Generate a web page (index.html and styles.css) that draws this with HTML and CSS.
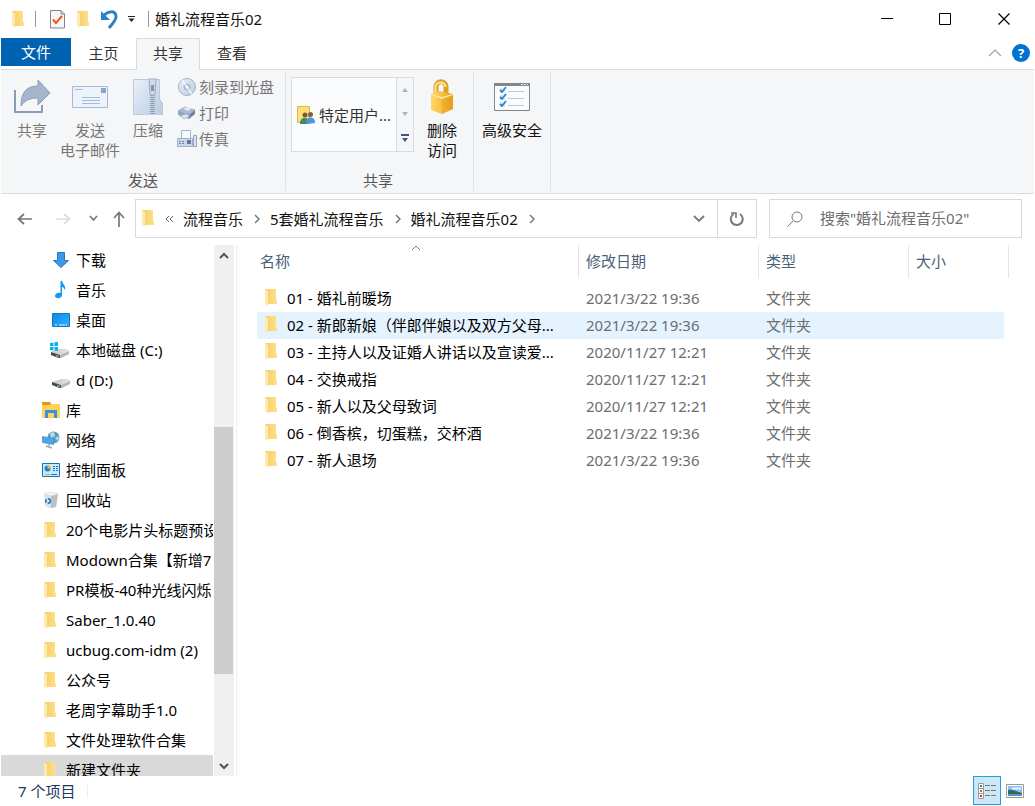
FILE: index.html
```html
<!DOCTYPE html>
<html lang="zh-CN">
<head>
<meta charset="utf-8">
<title>婚礼流程音乐02</title>
<link rel="stylesheet" href="styles.css">
</head>
<body>
<svg class="defs" aria-hidden="true">
  <defs>
    <linearGradient id="gFolder" x1="0" x2="1"><stop offset="0" stop-color="#f3cd67"/><stop offset="1" stop-color="#ffe08a"/></linearGradient>
    <linearGradient id="gSteel" x1="0" y1="0" x2="1" y2="1"><stop offset="0" stop-color="#eaf1fa"/><stop offset="1" stop-color="#b9cbe2"/></linearGradient>
    <linearGradient id="gGold" x1="0" x2="1"><stop offset="0" stop-color="#ffd966"/><stop offset="1" stop-color="#eda41c"/></linearGradient>
    <linearGradient id="gBlue" x1="0" y1="0" x2="1" y2="1"><stop offset="0" stop-color="#0a86e8"/><stop offset="1" stop-color="#35b4fa"/></linearGradient>
    <linearGradient id="gDrive" x1="0" x2="1"><stop offset="0" stop-color="#c4c6c9"/><stop offset="1" stop-color="#e3e4e6"/></linearGradient>
  </defs>
  <symbol id="folder" viewBox="0 0 12 17"><path d="M0 0h11v11h1v4H3z" fill="url(#gFolder)"/><path d="M0 0l3 2.500V17l-3-2z" fill="#ffeaae"/></symbol>
  <symbol id="drive" viewBox="0 0 18 12"><path d="M0 6l9-3h7l2 2-9 4z" fill="url(#gDrive)"/><path d="M0 6l9 3v3l-3-.5L0 9z" fill="#4a4a4a"/><path d="M9 9l9-4v3l-8 4H9z" fill="#b4b6b9"/><path d="M5 10h2.500" stroke="#5fdc4f" stroke-width="1.500"/></symbol>
  <symbol id="chev" viewBox="0 0 6 10"><path d="M1 1l4 4-4 4" fill="none" stroke="#777" stroke-width="1.500"/></symbol>
</svg>

<header class="titlebar">
  <svg class="folder"><use href="#folder"/></svg>
  <i class="tick"></i>
  <button class="quick" aria-label="属性"><svg width="15" height="19" viewBox="0 0 15 19"><path d="M.5.5h10.500l3.500 3.500v14H.5z" fill="#f5f6f7" stroke="#858585"/><path d="M11 .5v3.500h3.500" fill="none" stroke="#858585"/><path d="M3 9.500l3 3.500 6-7" fill="none" stroke="#f0561d" stroke-width="2"/></svg></button>
  <button class="quick" aria-label="新建文件夹"><svg class="folder"><use href="#folder"/></svg></button>
  <button class="quick undo" aria-label="撤消"><svg width="17" height="19" viewBox="0 0 17 19"><path d="M2 6c5-5 12-6 13 0 .5 4-3 7-7 12" fill="none" stroke="#2d7fc8" stroke-width="3"/><path d="M0 1v9h9L6 7 3 4z" fill="#2d7fc8"/></svg></button>
  <button class="quick" aria-label="自定义快速访问工具栏"><svg width="7" height="6" viewBox="0 0 7 6"><path d="M0 .5h7" stroke="#222"/><path d="M.5 2.500h6l-3 3.500z" fill="#222"/></svg></button>
  <i class="tick end"></i>
  <h1>婚礼流程音乐02</h1>
  <div class="winbtns">
    <button aria-label="最小化"><svg width="12" height="12"><path d="M0 5.500h12" stroke="#000"/></svg></button>
    <button aria-label="最大化"><svg width="12" height="12"><path d="M.5.5h11v11H.5z" fill="none" stroke="#000"/></svg></button>
    <button aria-label="关闭"><svg width="12" height="12"><path d="M.5.5l11 11M11.500.5l-11 11" stroke="#000" stroke-width="1.200"/></svg></button>
  </div>
</header>

<nav class="tabs">
  <button class="file">文件</button>
  <button>主页</button>
  <button class="active">共享</button>
  <button>查看</button>
  <span class="help">
    <button aria-label="最小化功能区"><svg width="14" height="8"><path d="M1 7l6-6 6 6" fill="none" stroke="#aaa" stroke-width="1.400"/></svg></button>
    <button class="q" aria-label="帮助">?</button>
  </span>
</nav>

<section class="ribbon">
  <div class="group send">
    <div class="tools">
      <button class="big off"><svg width="38" height="40" viewBox="0 0 38 40"><path d="M2 13v22h27v-7" fill="none" stroke="#8b9cb8" stroke-width="2"/><path d="M8 29c0-13 5-20 17-20V3l12 13-12 12v-7c-8 0-13 2-17 8z" fill="#a6b4cc" stroke="#8b9cb8"/></svg><span>共享</span></button>
      <button class="big off"><svg width="36" height="40" viewBox="0 0 36 40"><path d="M.5 9.500h35v21H.5z" fill="#edf3fa" stroke="#a6bad6"/><path d="M29 11h5v5h-5z" fill="#8da3c7"/><path d="M3 12.500h8M10 20.500h18M10 23.500h18M10 26.500h18" stroke="#a6bad6"/></svg><span>发送<br>电子邮件</span></button>
      <button class="big off"><svg width="30" height="40" viewBox="0 0 30 40"><path d="M0 2h27v20l3 4v12H0z" fill="url(#gSteel)"/><path d="M.5 2.500h26v20l3 4v11H.5z" fill="none" stroke="#bccbe0"/><path d="M16 2h7v36h-7z" fill="#c3d1e4"/><path d="M19.500 18v20" stroke="#8b98ae" stroke-width="4" stroke-dasharray="1 1"/><path d="M16 2h7l-1 14c-1 3-4 3-5 0z" fill="#d0daea" stroke="#9babc4"/><path d="M18 8h3v6h-3z" fill="#8595ad"/></svg><span>压缩</span></button>
      <div class="small">
        <button><svg width="20" height="20" viewBox="0 0 20 20"><circle cx="10" cy="10" r="8.500" fill="url(#gSteel)" stroke="#a0b2cd"/><circle cx="10" cy="10" r="3.500" fill="#a9bad3"/><circle cx="10" cy="10" r="1.500" fill="#fff"/><path d="M10 10L5 3M10 10l5 7" stroke="#fff" stroke-width="1.500" opacity=".7"/></svg>刻录到光盘</button>
        <button><svg width="20" height="20" viewBox="0 0 20 20"><path d="M1 8l7-4 10 3-6 5z" fill="#a9b9d2" stroke="#8596b4" stroke-width=".6"/><path d="M1 8l11 4v4L1 12z" fill="#93a5c2"/><path d="M12 12l6-5v4l-6 5z" fill="#6f82a3"/><path d="M6 6l4-2 5 1.500L11 8z" fill="#dfe8f3"/><path d="M3 13l6-2 4 2-6 3z" fill="#dce7f3" stroke="#93a5c2" stroke-width=".6"/></svg>打印</button>
        <button><svg width="20" height="20" viewBox="0 0 20 20"><path d="M4.500 9V1.500h9V9" fill="#f4f8fc" stroke="#a5b5cd"/><path d="M.5 9.500h15v8H.5z" fill="#cbd8e8" stroke="#9fb0ca"/><path d="M16.500 6.500h3v11h-3z" fill="#dce6f2" stroke="#91a3c0"/><path d="M2 12.500h6M2 14.500h6" stroke="#6f82a3" stroke-dasharray="2 1"/><path d="M10 11h4v4h-4z" fill="#62789f"/></svg>传真</button>
      </div>
    </div>
    <div class="caption">发送</div>
  </div>
  <div class="group share">
    <div class="tools">
      <div class="gallery">
        <button class="people"><svg width="18" height="20" viewBox="0 0 18 20"><path d="M.5 1.500h12v16H.5z" fill="#ffdf7a" stroke="#e3b63b"/><circle cx="8" cy="10" r="2.500" fill="#745a3e"/><path d="M3 19c0-5 2-6 5-6s4 2 4 6z" fill="#3f8c62"/><circle cx="13.500" cy="9.500" r="2.500" fill="#82633d"/><path d="M9 19c0-5 2-6.500 4.500-6.500S18 14 18 18z" fill="#4e95d3"/></svg>特定用户...</button>
        <div class="spin">
          <button aria-label="上一行"><svg width="6" height="4"><path d="M0 4l3-4 3 4z" fill="#acb4be"/></svg></button>
          <button aria-label="下一行"><svg width="6" height="4"><path d="M0 0l3 4 3-4z" fill="#acb4be"/></svg></button>
          <button aria-label="更多"><svg width="8" height="9"><path d="M0 0h8v2H0zM1 4l3 4 3-4z" fill="#3f5675"/></svg></button>
        </div>
      </div>
      <button class="big"><svg width="28" height="40" viewBox="0 0 28 40"><path d="M8 18V10c0-7 10-7 10 0v8" fill="none" stroke="#dca129" stroke-width="5"/><path d="M7.500 17V10c0-6 10-6 10 0" fill="none" stroke="#ffe48b" stroke-width="2"/><path d="M3 17l8-3 14 3v15l-11 5-11-4z" fill="url(#gGold)"/><path d="M3 17l11 3 11-3v1l-11 4-11-4z" fill="#ffe79a"/><path d="M14 22v15l11-5V18z" fill="#df951a" opacity=".35"/></svg><span>删除<br>访问</span></button>
    </div>
    <div class="caption">共享</div>
  </div>
  <div class="group adv">
    <div class="tools">
      <button class="big"><svg width="36" height="40" viewBox="0 0 36 40"><path d="M.5 6.500h35v27H.5z" fill="#fbfcfd" stroke="#83868a"/><path d="M0 6h36v3H0z" fill="#83868a"/><path d="M27 7.500h7" stroke="#eee" stroke-dasharray="2 1"/><path d="M14 14.500h16M14 21.500h16M14 28.500h16" stroke="#c5c8cb"/><path d="M6 11h5v5H6zM6 18h5v5H6zM6 25h5v5H6z" fill="#d8e9f7"/><path d="M6 13l2 2 4-5M6 20l2 2 4-5M6 27l2 2 4-5" fill="none" stroke="#2488d8" stroke-width="1.800"/></svg><span>高级安全</span></button>
    </div>
  </div>
</section>

<div class="navbar">
  <div class="arrows">
    <button aria-label="后退"><svg width="16" height="12"><path d="M15 6H1.500M7 1L1.500 6 7 11" fill="none" stroke="#777" stroke-width="1.700"/></svg></button>
    <button aria-label="前进"><svg width="16" height="12"><path d="M1 6h13.500M9 1l5.500 5L9 11" fill="none" stroke="#ddd" stroke-width="1.700"/></svg></button>
    <button class="recent" aria-label="最近浏览的位置"><svg width="9" height="7"><path d="M1 1l3.500 4L8 1" fill="none" stroke="#777" stroke-width="1.700"/></svg></button>
    <button class="up" aria-label="上移"><svg width="12" height="16"><path d="M6 16V2M1 7l5-5.500L11 7" fill="none" stroke="#777" stroke-width="1.700"/></svg></button>
  </div>
  <div class="address">
    <svg class="folder"><use href="#folder"/></svg>
    <svg class="more" width="9" height="8"><path d="M4 1L1 4l3 3M8 1L5 4l3 3" fill="none" stroke="#666"/></svg>
    <button>流程音乐</button><svg class="chev"><use href="#chev"/></svg>
    <button>5套婚礼流程音乐</button><svg class="chev"><use href="#chev"/></svg>
    <button>婚礼流程音乐02</button><svg class="chev"><use href="#chev"/></svg>
    <button class="drop" aria-label="以前的位置"><svg width="12" height="8"><path d="M1 1l5 5 5-5" fill="none" stroke="#777" stroke-width="1.800"/></svg></button>
    <button class="refresh" aria-label="刷新"><svg width="16" height="16" viewBox="0 0 16 16"><path d="M11 3a6 6 0 1 1-6.500 0" fill="none" stroke="#777" stroke-width="2"/><path d="M2 2h5v5" fill="none" stroke="#777" stroke-width="1.600"/></svg></button>
  </div>
  <label class="search">
    <svg width="16" height="16"><circle cx="10" cy="6" r="5" fill="none" stroke="#777"/><path d="M6 10l-5.500 5.500" stroke="#777"/></svg>
    <input type="text" aria-label="搜索" placeholder='搜索"婚礼流程音乐02"'>
  </label>
</div>

<div class="body">
  <aside class="side">
    <ul class="tree">
      <li class="deep"><svg width="18" height="18"><path d="M5.500 1.500h7v8h4L9 16.500 1.500 9.500h4z" fill="#3d98e8" stroke="#2678c2"/></svg>下载</li>
      <li class="deep"><svg width="18" height="18"><path d="M8.500 0h1.500c1 4 4 4 3 9-1-2-2-3-3-3v8c0 4-7 4-7 1s4-4 5.500-3z" fill="#0b9bf5"/></svg>音乐</li>
      <li class="deep"><svg width="18" height="18"><path d="M.5 2.500h17v13H.5z" fill="url(#gBlue)" stroke="#087bc8"/><path d="M3 14h12" stroke="#d5efff" stroke-dasharray="2 2 6 1"/></svg>桌面</li>
      <li class="deep"><svg width="20" height="18" viewBox="0 0 20 18"><svg x="1" y="5" width="18" height="12"><use href="#drive"/></svg><path d="M0 2l3.500-.5V5H0zM4.500 1.300L8 1v4H4.500zM0 6h3.500v3.500L0 9zM4.500 6H8v4l-3.500-.5z" fill="#00b3ee"/></svg>本地磁盘 (C:)</li>
      <li class="deep"><svg width="18" height="18"><svg y="5" width="18" height="12"><use href="#drive"/></svg></svg>d (D:)</li>
      <li><svg width="18" height="18"><path d="M0 1h8l1 2h9v14H0z" fill="#ffd35b"/><path d="M0 1h8l1 2-2 1H0z" fill="#d99a0f"/><path d="M3 9h12v8h-3v-5H6v5H3z" fill="#3c91dc"/></svg>库</li>
      <li><svg width="18" height="18"><circle cx="11.500" cy="6.500" r="6" fill="#5a9dbb"/><path d="M8 2l4-1 1 4-4 2zM13 7l4-2-1 5z" fill="#b6dce7"/><path d="M.5 5.500l11 2v6l-11-2z" fill="#3fa9f5" stroke="#5a88aa" stroke-width=".7"/><path d="M7 13v2.500M4 15l6 2" fill="none" stroke="#9aabb7" stroke-width="1.500"/></svg>网络</li>
      <li><svg width="18" height="18"><path d="M.5 2.500h17v13H.5z" fill="#c7eaff" stroke="#1a75ad"/><circle cx="5.500" cy="7.500" r="3" fill="#1e82cc"/><path d="M5.500 7.500v-4a4 4 0 0 1 3 4z" fill="#ffb629"/><path d="M11 5.500h2m1 0h2m-5 2h2m1 0h2m-5 2h2m1 0h2" stroke="#167bc0"/><path d="M3 13.500h5" stroke="#ef9d26"/><path d="M9 13.500h6" stroke="#167bc0"/></svg>控制面板</li>
      <li><svg width="18" height="18"><path d="M2 3l6-2 8 2-2 13-6 1-5-2z" fill="#dce1e5"/><path d="M9 5l7-2-2 13-5 1z" fill="#b9c1c8"/><path d="M2 3l6-2 8 2-7 2z" fill="#f6f7f8" stroke="#cbd1d5" stroke-width=".5"/><circle cx="6" cy="10" r="2.300" fill="none" stroke="#1979c9" stroke-width="1.600" stroke-dasharray="3.500 1.300"/></svg>回收站</li>
      <li><svg class="folder"><use href="#folder"/></svg>20个电影片头标题预设</li>
      <li><svg class="folder"><use href="#folder"/></svg>Modown合集【新增7</li>
      <li><svg class="folder"><use href="#folder"/></svg>PR模板-40种光线闪烁</li>
      <li><svg class="folder"><use href="#folder"/></svg>Saber_1.0.40</li>
      <li><svg class="folder"><use href="#folder"/></svg>ucbug.com-idm (2)</li>
      <li><svg class="folder"><use href="#folder"/></svg>公众号</li>
      <li><svg class="folder"><use href="#folder"/></svg>老周字幕助手1.0</li>
      <li><svg class="folder"><use href="#folder"/></svg>文件处理软件合集</li>
      <li class="current"><svg class="folder"><use href="#folder"/></svg>新建文件夹</li>
    </ul>
    <div class="scroll">
      <button aria-label="向上滚动"><svg width="10" height="7"><path d="M1 6l4-4 4 4" fill="none" stroke="#555" stroke-width="2"/></svg></button>
      <div class="track"><div class="thumb"></div></div>
      <button aria-label="向下滚动"><svg width="10" height="7"><path d="M1 1l4 4 4-4" fill="none" stroke="#555" stroke-width="2"/></svg></button>
    </div>
  </aside>
  <main class="list">
    <table>
      <colgroup><col class="c-name"><col class="c-date"><col class="c-type"><col class="c-size"></colgroup>
      <thead><tr><th>名称<svg class="sort" width="10" height="6"><path d="M1 5l4-4 4 4" fill="none" stroke="#777"/></svg></th><th>修改日期</th><th>类型</th><th>大小</th></tr></thead>
      <tbody>
        <tr class="gap"><td colspan="4"></td></tr>
        <tr><td><svg class="folder"><use href="#folder"/></svg>01 - 婚礼前暖场</td><td>2021/3/22 19:36</td><td>文件夹</td><td></td></tr>
        <tr class="hover"><td><svg class="folder"><use href="#folder"/></svg>02 - 新郎新娘（伴郎伴娘以及双方父母...</td><td>2021/3/22 19:36</td><td>文件夹</td><td></td></tr>
        <tr><td><svg class="folder"><use href="#folder"/></svg>03 - 主持人以及证婚人讲话以及宣读爱...</td><td>2020/11/27 12:21</td><td>文件夹</td><td></td></tr>
        <tr><td><svg class="folder"><use href="#folder"/></svg>04 - 交换戒指</td><td>2020/11/27 12:21</td><td>文件夹</td><td></td></tr>
        <tr><td><svg class="folder"><use href="#folder"/></svg>05 - 新人以及父母致词</td><td>2020/11/27 12:21</td><td>文件夹</td><td></td></tr>
        <tr><td><svg class="folder"><use href="#folder"/></svg>06 - 倒香槟，切蛋糕，交杯酒</td><td>2021/3/22 19:36</td><td>文件夹</td><td></td></tr>
        <tr><td><svg class="folder"><use href="#folder"/></svg>07 - 新人退场</td><td>2021/3/22 19:36</td><td>文件夹</td><td></td></tr>
      </tbody>
    </table>
  </main>
</div>

<footer class="status">
  <span>7 个项目</span>
  <div class="views">
    <button class="on" aria-label="详细信息"><svg width="20" height="18" viewBox="0 0 20 18"><path d="M1.500 1.500h5v5h-5zM1.500 6.500h5v5h-5zM1.500 11.500h5v5h-5z" fill="#fff" stroke="#999"/><path d="M3 3h2v2H3z" fill="#268bb0"/><path d="M3 8h2v2H3z" fill="#8c8c2c"/><path d="M3 13h2v2H3z" fill="#c03a28"/><path d="M8 3.500h5m1 0h5M8 8.500h5m1 0h5M8 13.500h5m1 0h5" stroke="#777"/></svg></button>
    <button aria-label="大缩略图"><svg width="18" height="14" viewBox="0 0 18 14"><path d="M.5.5h17v13H.5z" fill="#fff" stroke="#999"/><path d="M2 2h14v10H2z" fill="#8fc0f3"/><path d="M2 6c4-1 8 1 14 3v1H2z" fill="#2f6a5c"/><path d="M2 10h14v2H2z" fill="#5b93c4"/><path d="M6 4.500h9" stroke="#e5f2ff" stroke-width="2"/></svg></button>
  </div>
</footer>
</body>
</html>
```

FILE: styles.css
```css
* { box-sizing: border-box; }

body {
  margin: 0;
  padding: 0 1px;
  height: 100vh;
  display: flex;
  flex-direction: column;
  background: #fff;
  color: #111;
  font: 15px/20px "Noto Sans", "Noto Sans CJK SC", sans-serif;
  overflow: hidden;
}

button {
  margin: 0;
  padding: 0;
  border: 0;
  background: none;
  color: inherit;
  font: inherit;
}

svg { display: block; flex: none; }
.defs { position: absolute; width: 0; height: 0; }
.folder { width: 12px; height: 17px; }

/* title bar */
.titlebar {
  display: flex;
  align-items: center;
  height: 38px;
  flex: none;
  padding-left: 11px;
}
.tick { width: 1px; height: 16px; margin: 0 14px 0 11px; background: #999; }
.tick.end { margin: 0 6px 0 13px; }
.quick { margin-right: 12px; }
.quick.undo { margin-right: 10px; }
.quick + .tick { margin-left: 1px; }
.titlebar h1 { margin: 0; font-size: 15px; font-weight: 400; }
.winbtns { display: flex; margin-left: auto; }
.winbtns button { width: 58px; height: 36px; display: grid; place-items: center; }
.winbtns button:last-child { width: 60px; }

/* ribbon tabs */
.tabs {
  display: flex;
  height: 32px;
  flex: none;
  border-bottom: 1px solid #dadbdc;
  color: #333;
}
.tabs > button { width: 64px; height: 32px; padding-bottom: 2px; border: 1px solid transparent; }
.tabs > .file { width: 70px; height: 28px; padding: 0; background: #0063b1; color: #fff; }
.tabs > .active { border-color: #dadbdc; border-bottom-color: #f5f6f7; background: #f5f6f7; }
.tabs > .file + button { width: 65px; }
.help { display: flex; align-items: center; gap: 10px; margin-left: auto; padding: 0 4px 2px 0; }
.q {
  width: 18px;
  height: 18px;
  border-radius: 50%;
  background: #0073d2;
  color: #fff;
  font-weight: 700;
  font-size: 13px;
  line-height: 18px;
}

/* ribbon */
.ribbon {
  display: flex;
  height: 124px;
  flex: none;
  padding: 2px 0;
  border-bottom: 1px solid #dadbdc;
  background: #f5f6f7;
}
.group { display: flex; flex-direction: column; border-right: 1px solid #e2e3e4; padding: 5px 5px 0; }
.group.send { padding: 5px 11px 0 2px; }
.group.share { padding-right: 2px; }
.tools { display: flex; flex: 1; }
.caption { height: 21px; text-align: center; color: #555; }
.send .caption { padding-left: 9px; }
.share .caption { padding-right: 6px; }
.big { width: 58px; display: flex; flex-direction: column; align-items: center; gap: 3px; line-height: 20px; white-space: nowrap; }
.share .big { margin-left: -1px; }
.adv .big { width: 66px; }
.off, .small { color: #777; }
.small { display: flex; flex-direction: column; gap: 6px; }
.small button { display: flex; align-items: center; gap: 2px; height: 20px; }
.gallery { display: flex; height: 75px; border: 1px solid #dadbdc; background: #fbfcfd; }
.people { display: flex; align-items: center; gap: 4px; width: 104px; padding-left: 5px; color: #333; }
.spin { display: flex; flex-direction: column; width: 17px; border-left: 1px solid #dadbdc; background: #f5f6f7; }
.spin button { flex: 1; display: grid; place-items: center; }

/* navigation bar */
.navbar { display: flex; align-items: center; height: 51px; flex: none; padding: 0 12px 2px 0; }
.arrows { display: flex; align-items: center; width: 134px; padding-left: 16px; }
.arrows button { margin-right: 22px; }
.arrows .recent { margin: 0 15px 0 -4px; }
.arrows .up { margin: 0; }
.address { display: flex; align-items: center; flex: 1; height: 39px; padding-left: 6px; border: 1px solid #d9d9d9; }
.address .more { margin: 0 9px 0 11px; }
.chev { width: 6px; height: 10px; margin: 0 10px 0 11px; }
.drop { margin-left: auto; padding: 10px 12px; }
.refresh { align-self: stretch; width: 39px; display: grid; place-items: center; border-left: 1px solid #d9d9d9; }
.search { display: flex; align-items: center; gap: 17px; width: 253px; height: 39px; margin-left: 12px; padding-left: 17px; border: 1px solid #d9d9d9; }
.search input { flex: 1; min-width: 0; padding: 0 0 2px; border: 0; outline: 0; background: none; font: inherit; }
.search input::placeholder { color: #6d6d6d; opacity: 1; }

/* navigation pane and file list */
.body { display: flex; flex: 1; min-height: 0; }
.side { display: flex; width: 236px; padding-right: 2px; border-right: 1px solid #f0f0f0; }
.tree { flex: 1; min-width: 0; margin: 0; padding: 0 1px 0 0; list-style: none; overflow: hidden; }
.tree li { display: flex; align-items: center; height: 30px; padding-left: 65px; white-space: nowrap; color: #000; overflow: hidden; }
.tree li.deep { padding-left: 75px; }
.tree li > svg { margin-left: -24px; margin-right: 6px; }
.tree li > svg.folder { margin-left: -22px; margin-right: 10px; }
.tree li > svg[width="20"] { margin-left: -26px; }
.tree .current { background: #d9d9d9; }
.scroll { display: flex; flex-direction: column; width: 20px; background: #f0f0f0; }
.scroll button { height: 20px; display: grid; place-items: center; }
.track { flex: 1; display: grid; grid-template-rows: 162fr 247fr 82fr; }
.thumb { grid-row: 2; margin-right: 1px; background: #cdcdcd; }

.list { flex: 1; min-width: 0; padding-left: 20px; }
table { width: 752px; table-layout: fixed; border-collapse: separate; border-spacing: 0; }
.c-name { width: 322px; }
.c-date { width: 180px; }
.c-type { width: 150px; }
.c-size { width: 100px; }
th { position: relative; height: 33px; padding: 0 0 2px 7px; border-right: 1px solid #e5e5e5; font-weight: 400; text-align: left; color: #4c607a; }
th:first-child { padding-left: 3px; }
.sort { position: absolute; left: 50%; top: 0; margin-left: -7px; }
td { height: 27px; padding: 0 0 2px 7px; color: #6d6d6d; white-space: nowrap; }
td:first-child { color: #000; }
td:last-child { border-right: 5px solid #fff; }
.gap td { height: 7px; padding: 0; }
td .folder { display: inline-block; margin: 0 10px 0 1px; vertical-align: -2px; }
.hover { background: #e5f3ff; }

/* status bar */
.status { display: flex; align-items: center; height: 30px; flex: none; padding: 0 10px 1px 17px; color: #1e395b; }
.status > span { padding-right: 12px; border-right: 1px solid #eee; line-height: 14px; }
.views { display: flex; align-items: center; gap: 5px; margin-left: auto; }
.views .on { width: 28px; height: 29px; display: grid; place-items: center; border: 1px solid #26a0da; background: #cce8f6; }
```
